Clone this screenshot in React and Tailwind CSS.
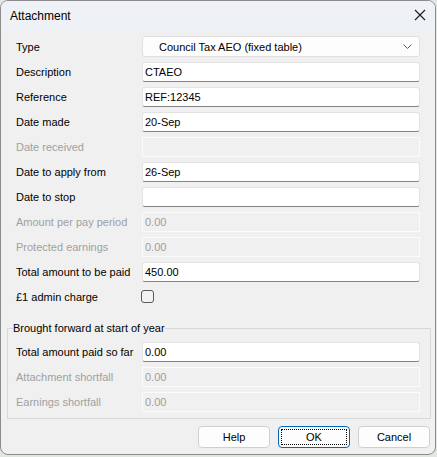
import React from "react";

const font = { fontFamily: '"Liberation Sans", Arial, sans-serif' };

function TextBox({ value = "" }) {
  return (
    <div className="w-[278px] h-[20px] bg-white border border-[#e3e3e3] border-b-[#838383] rounded-[3px] flex items-center pl-[2px] text-black">
      {value}
    </div>
  );
}

function DisabledBox({ value = "" }) {
  return (
    <div className="w-[278px] h-[20px] border border-[#fbfbfb] flex items-center pl-[2px] text-[#9e9e9e]">
      {value}
    </div>
  );
}

function Row({ label, disabled, children }) {
  return (
    <div className="h-[25px] flex items-center">
      <div className={"w-[126px] " + (disabled ? "text-[#a0a0a0]" : "text-black")}>{label}</div>
      {children}
    </div>
  );
}

function Button({ label, isDefault }) {
  if (isDefault) {
    return (
      <div className="relative w-[72px] h-[22px] bg-[#fdfdfd] border border-[#0067c0] rounded-[4px] flex items-center justify-center text-black">
        <div className="absolute inset-[2px] border border-dotted border-black"></div>
        {label}
      </div>
    );
  }
  return (
    <div className="w-[72px] h-[22px] bg-[#fdfdfd] border border-[#d0d0d0] rounded-[4px] flex items-center justify-center text-black">
      {label}
    </div>
  );
}

export default function App() {
  return (
    <div className="w-[437px] h-[457px] bg-[#e3e7e2] text-[11px] leading-[14px]" style={font}>
      <div className="w-[436px] h-[455px] border border-[#8c8c8c] rounded-lg bg-[#f0f0f0] overflow-hidden flex flex-col">
        {/* title bar */}
        <div className="h-[30px] bg-[#eef2f7] flex items-center justify-between pl-[9px] pr-[9px]">
          <span className="text-[12px] text-black">Attachment</span>
          <svg width="12" height="12" viewBox="0 0 12 12" className="mt-[-2px]">
            <path d="M1 1 L11 11 M11 1 L1 11" stroke="#1a1a1a" strokeWidth="1.1" fill="none" />
          </svg>
        </div>

        <div className="pt-[3px] pl-[15px]">
          <Row label="Type">
            <div className="w-[278px] h-[21px] bg-[#fdfdfd] border border-[#e0e0e0] rounded-[3px] flex items-center justify-between pl-[16px] pr-[7px] text-black">
              <span>Council Tax AEO (fixed table)</span>
              <svg width="9" height="5" viewBox="0 0 9 5">
                <path d="M0.5 0.5 L4.5 4.5 L8.5 0.5" stroke="#606060" strokeWidth="1" fill="none" />
              </svg>
            </div>
          </Row>
          <Row label="Description"><TextBox value="CTAEO" /></Row>
          <Row label="Reference"><TextBox value="REF:12345" /></Row>
          <Row label="Date made"><TextBox value="20-Sep" /></Row>
          <Row label="Date received" disabled><DisabledBox /></Row>
          <Row label="Date to apply from"><TextBox value="26-Sep" /></Row>
          <Row label="Date to stop"><TextBox /></Row>
          <Row label="Amount per pay period" disabled><DisabledBox value="0.00" /></Row>
          <Row label="Protected earnings" disabled><DisabledBox value="0.00" /></Row>
          <Row label="Total amount to be paid"><TextBox value="450.00" /></Row>
          <Row label="£1 admin charge">
            <div className="w-[13px] h-[13px] ml-[-1px] border border-[#5a5a5a] rounded-[3px] bg-[#f3f3f3]"></div>
          </Row>
        </div>

        <fieldset className="mt-[12px] ml-[6px] w-[424px] border border-[#d8d8d8]">
          <legend className="ml-[5px] text-black">Brought forward at start of year</legend>
          <div className="pl-[8px] pt-[4px] pb-[4px]">
            <Row label="Total amount paid so far"><TextBox value="0.00" /></Row>
            <Row label="Attachment shortfall" disabled><DisabledBox value="0.00" /></Row>
            <Row label="Earnings shortfall" disabled><DisabledBox value="0.00" /></Row>
          </div>
        </fieldset>

        <div className="mt-[7px] pr-[5px] flex justify-end gap-[8px]">
          <Button label="Help" />
          <Button label="OK" isDefault />
          <Button label="Cancel" />
        </div>
      </div>
    </div>
  );
}
